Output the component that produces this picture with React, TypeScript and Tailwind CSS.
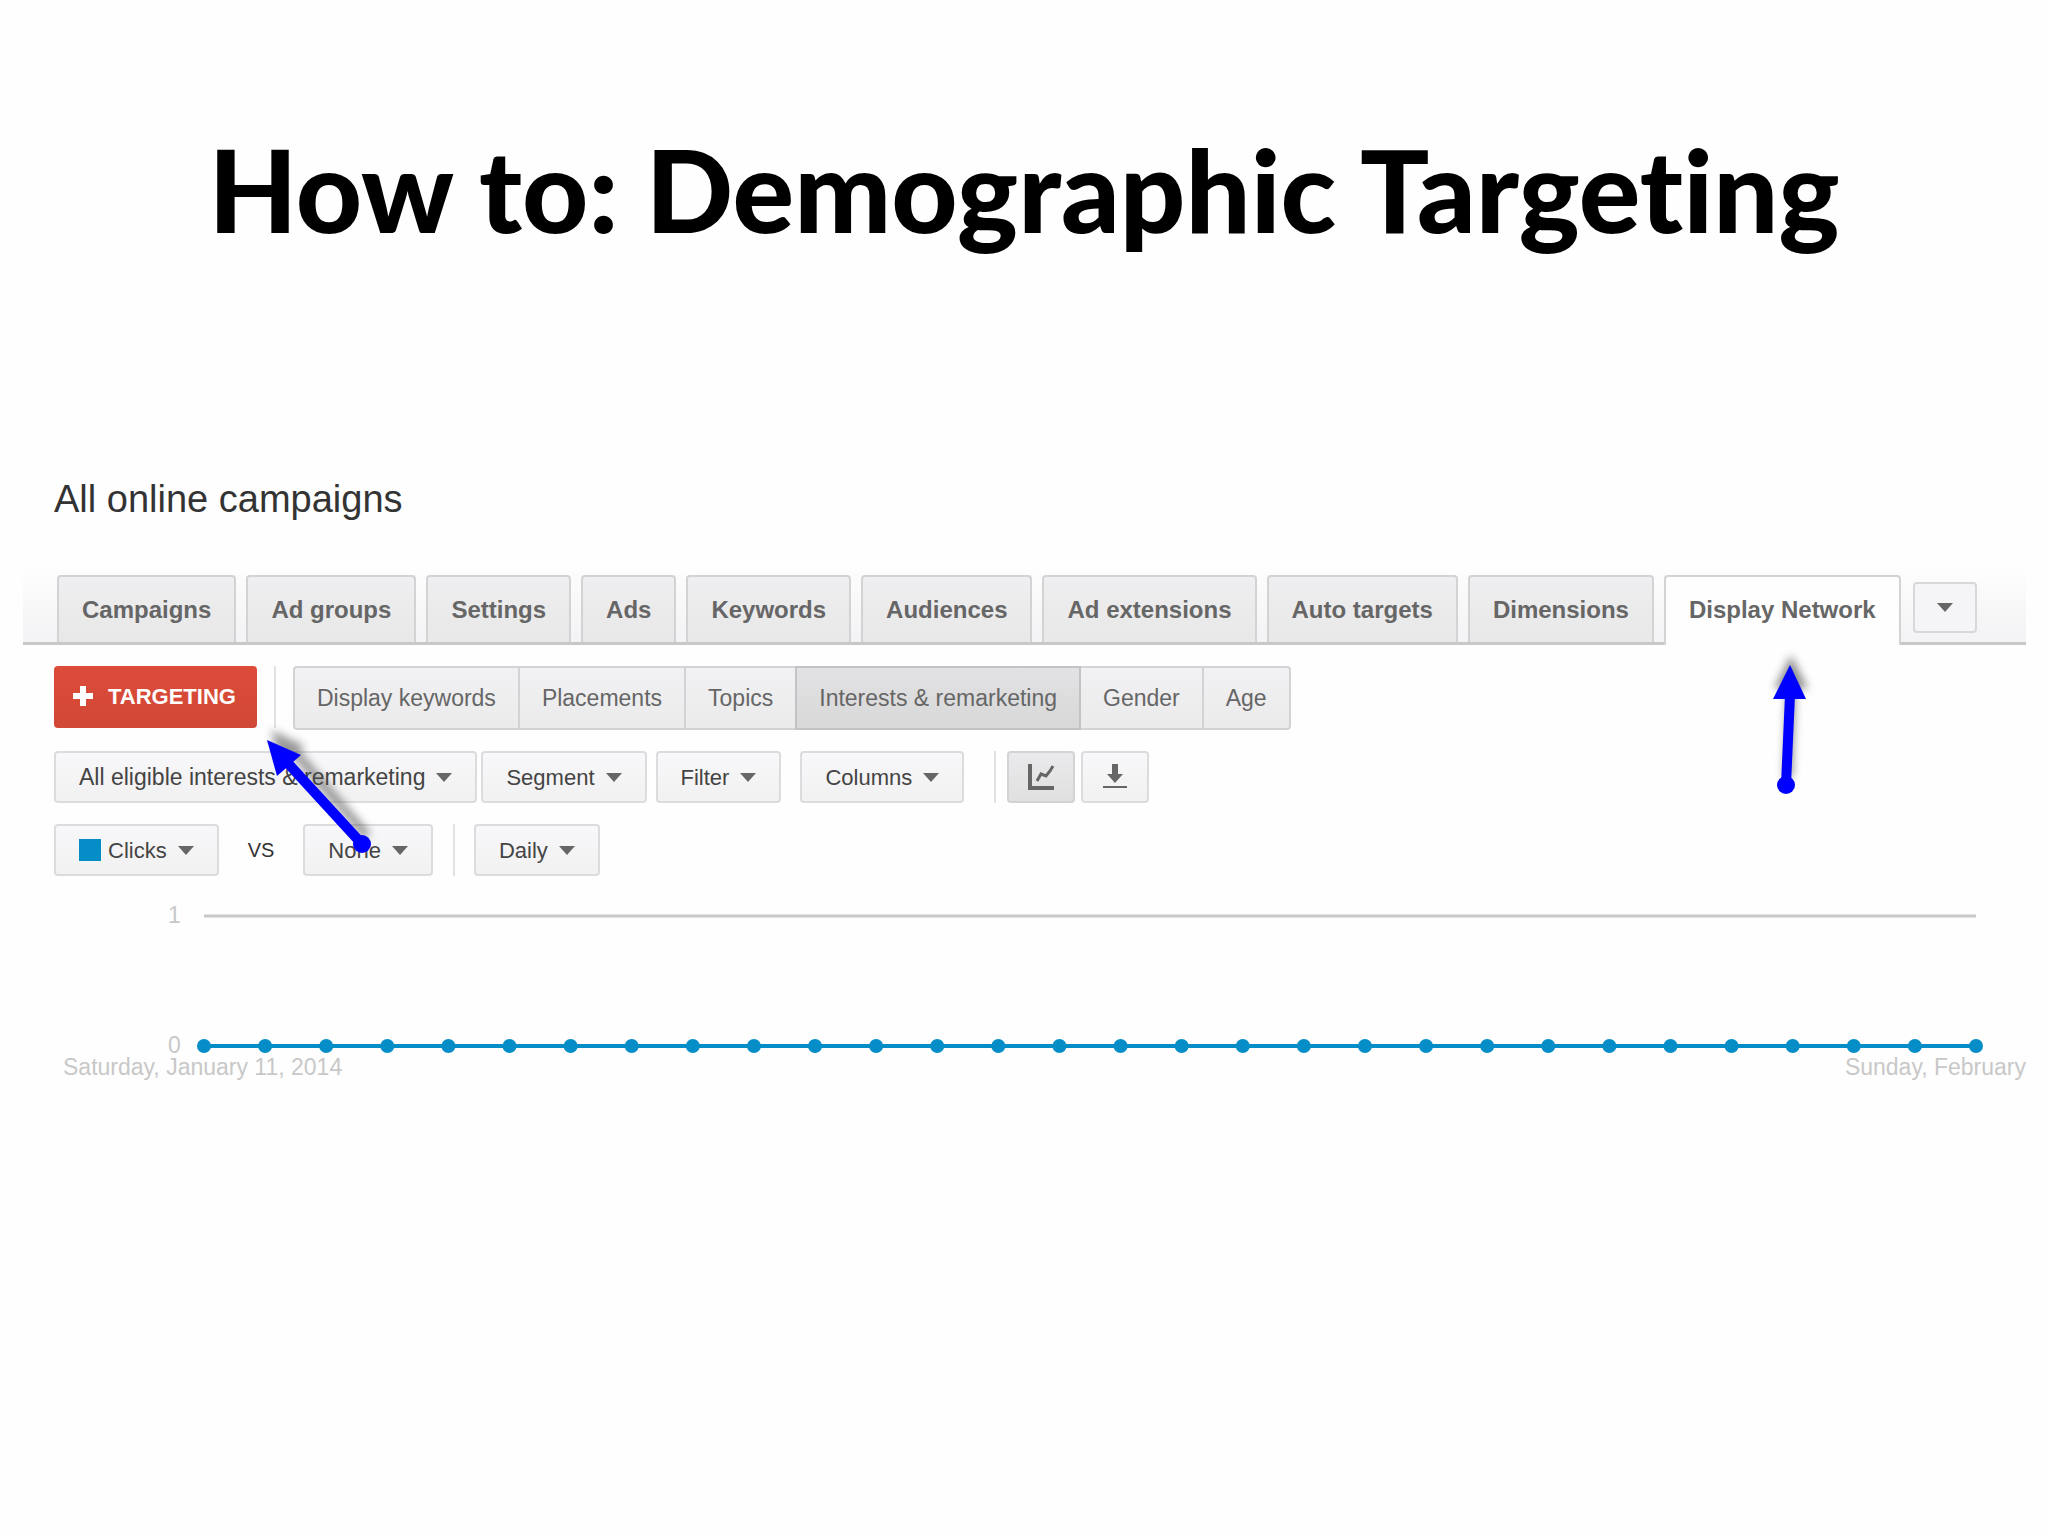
import { useState, type ReactNode } from 'react';
import clsx from 'clsx';

const mainTabs = [
  'Campaigns',
  'Ad groups',
  'Settings',
  'Ads',
  'Keywords',
  'Audiences',
  'Ad extensions',
  'Auto targets',
  'Dimensions',
  'Display Network',
];

const subTabs = ['Display keywords', 'Placements', 'Topics', 'Interests & remarketing', 'Gender', 'Age'];

const DAYS = 30;

const boxStyle =
  'flex h-[52px] items-center rounded-sm border-2 border-[#dcdbde] bg-linear-to-b from-[#f8f7f9] to-[#f1f1f2] text-[#444]';

export default function App() {
  const [activeTab, setActiveTab] = useState('Display Network');
  const [activeSubTab, setActiveSubTab] = useState('Interests & remarketing');
  const [isChartVisible, setIsChartVisible] = useState(true);

  return (
    <main className="min-h-screen overflow-hidden bg-[#fefefe] font-['Liberation_Sans',Arial,sans-serif]">
      <h1 className="pt-[122px] text-center font-['Lato',sans-serif] text-[115px] leading-[132px] font-black text-black [font-variant-ligatures:none]">
        How to: Demographic Targeting
      </h1>

      <section className="mt-[221px] pr-[22px] pl-[23px]">
        <h2 className="pl-[31px] text-[38px] leading-[48px] text-[#333]">All online campaigns</h2>

        <nav className="mt-[42px] flex h-[80px] items-end border-b-[3px] border-[#c8c7ca] bg-linear-to-b from-[#fefefe] to-[#f3f2f4] pl-[34px]">
          <div className="flex items-end gap-[10px]">
            {mainTabs.map((tab) => {
              const isActive = tab === activeTab;
              return (
                <button
                  key={tab}
                  onClick={() => setActiveTab(tab)}
                  className={clsx(
                    'relative rounded-t-sm border-2 border-b-0 border-[#d3d2d5] px-[23px] text-2xl font-bold whitespace-nowrap text-[#666]',
                    isActive ? '-mb-[3px] h-[70px] bg-[#fefefe] pb-[3px]' : 'h-[67px] bg-linear-to-b from-[#efeef0] to-[#e8e8e8]',
                  )}
                >
                  {tab}
                  {tab === 'Display Network' && <TabPointer />}
                </button>
              );
            })}
          </div>
          <button
            aria-label="More tabs"
            className="mb-[9px] ml-[12px] flex h-[51px] w-16 items-center justify-center rounded-sm border-2 border-[#d8d7da] bg-[#f5f4f6]"
          >
            <Caret />
          </button>
        </nav>

        <div className="mt-[21px] flex items-start pl-[31px]">
          <div className="relative">
            <button className="flex h-[62px] items-center gap-[15px] rounded-sm bg-linear-to-b from-[#dd4b39] to-[#d14836] pr-[21px] pb-0.5 pl-[19px] text-[22px] font-bold text-white">
              <svg width="20" height="20" viewBox="0 0 20 20" fill="currentColor" aria-hidden="true">
                <path d="M7 0h6v7h7v6h-7v7H7v-7H0V7h7z" />
              </svg>
              TARGETING
            </button>
            <TargetingPointer />
          </div>
          <Divider className="ml-[17px] h-[62px]" />
          <div className="ml-[17px] flex">
            {subTabs.map((tab) => (
              <button
                key={tab}
                onClick={() => setActiveSubTab(tab)}
                className={clsx(
                  '-ml-0.5 h-16 border-2 px-[22px] text-[23px] whitespace-nowrap text-[#666] first:ml-0 first:rounded-l-sm last:rounded-r-sm',
                  tab === activeSubTab
                    ? 'relative border-[#c3c2c5] bg-linear-to-b from-[#e2e1e3] to-[#d8d8d9]'
                    : 'border-[#d3d2d5] bg-linear-to-b from-[#f1f0f2] to-[#ebebec]',
                )}
              >
                {tab}
              </button>
            ))}
          </div>
        </div>

        <div className="mt-[21px] flex items-center pl-[31px]">
          <Dropdown className="text-[23px]" label="View" value="All eligible interests & remarketing" />
          <MenuButton className="ml-1">Segment</MenuButton>
          <MenuButton className="ml-[9px]">Filter</MenuButton>
          <MenuButton className="ml-[19px]">Columns</MenuButton>
          <Divider className="ml-[30px] h-[52px]" />
          <button
            aria-label="Toggle chart"
            aria-pressed={isChartVisible}
            onClick={() => setIsChartVisible(!isChartVisible)}
            className="ml-[11px] flex h-[52px] w-[68px] items-center justify-center rounded-sm border-2 border-[#d3d2d5] bg-linear-to-b from-[#eae9eb] to-[#e0e0e1]"
          >
            <svg width="28" height="28" viewBox="0 0 28 28" fill="none" stroke="#666" aria-hidden="true">
              <path d="M3 1v24h24" strokeWidth="4" />
              <path d="M10 18l4-7 5 2 4-5 3-5" strokeWidth="3" />
            </svg>
          </button>
          <button aria-label="Download report" className={clsx(boxStyle, 'ml-[6px] w-[68px] justify-center')}>
            <svg width="24" height="26" viewBox="0 0 24 26" fill="#666" aria-hidden="true">
              <path d="M9 0h6v10h5l-8 9-8-9h5z" />
              <path d="M0 22h24v2H0z" />
            </svg>
          </button>
        </div>

        <div className="mt-[21px] flex items-center pl-[31px]">
          <Dropdown className="text-[22px]" label="Primary metric" value="Clicks" hasSwatch />
          <span className="mx-[29px] text-xl text-[#333]">VS</span>
          <Dropdown className="text-[22px]" label="Secondary metric" value="None" />
          <Divider className="ml-5 h-[52px]" />
          <Dropdown className="ml-[19px] text-[22px]" label="Interval" value="Daily" />
        </div>

        {isChartVisible && <ClicksChart />}
      </section>
    </main>
  );
}

const Caret = () => (
  <svg width="16" height="9" viewBox="0 0 16 9" fill="#666" className="shrink-0" aria-hidden="true">
    <path d="M0 0h16L8 9z" />
  </svg>
);

const Divider = ({ className }: { className?: string }) => <div className={clsx('w-0.5 bg-[#e2e1e5]', className)} />;

const MenuButton = ({ children, className }: { children: ReactNode; className?: string }) => (
  <button className={clsx(boxStyle, 'gap-[11px] px-[23px] text-[22px]', className)}>
    {children}
    <Caret />
  </button>
);

interface DropdownProps {
  label: string;
  value: string;
  hasSwatch?: boolean;
  className?: string;
}

const Dropdown = ({ label, value, hasSwatch, className }: DropdownProps) => (
  <label className={clsx(boxStyle, 'gap-[11px] px-[23px]', className)}>
    <span className="flex items-center gap-[7px]">
      {hasSwatch && <span className="h-[22px] w-[22px] bg-[#058dc7]" />}
      <select aria-label={label} className="field-sizing-content appearance-none bg-transparent outline-none">
        <option>{value}</option>
      </select>
    </span>
    <Caret />
  </label>
);

const ClicksChart = () => (
  <div className="mt-[26px] text-[23px] leading-[26px] text-[#c8c8c8]">
    <div className="flex pr-[50px] pl-[145px]">
      <div className="flex w-9 flex-col justify-between">
        <span>1</span>
        <span>0</span>
      </div>
      <svg className="h-[156px] min-w-0 flex-1 overflow-visible" role="img" aria-label="Clicks per day">
        <line x1="0" y1="14" x2="100%" y2="14" stroke="#c8c7ca" strokeWidth="3" />
        <line x1="0" y1="144" x2="100%" y2="144" stroke="#058dc7" strokeWidth="4" />
        {Array.from({ length: DAYS }, (_, i) => (
          <circle key={i} cx={`${(i / (DAYS - 1)) * 100}%`} cy="144" r="7" fill="#058dc7" />
        ))}
      </svg>
    </div>
    <div className="-mt-1 flex justify-between pl-10">
      <span>Saturday, January 11, 2014</span>
      <span>Sunday, February</span>
    </div>
  </div>
);

const TargetingPointer = () => (
  <svg
    className="pointer-events-none absolute top-[62px] left-[201px] z-10 overflow-visible"
    width="120"
    height="130"
    viewBox="0 0 120 130"
    aria-hidden="true"
  >
    <g fill="#444" stroke="#444" opacity="0.55" className="blur-[4px]">
      <path d="M16 2L50 18 26 38z" stroke="none" />
      <path d="M38 22L112 108" strokeWidth="9" />
    </g>
    <path d="M12 12L46 27 22 48z" fill="#00f" />
    <path d="M30 32L107 116" stroke="#00f" strokeWidth="10" />
    <circle cx="107" cy="116" r="9" fill="#00f" />
  </svg>
);

const TabPointer = () => (
  <svg
    className="pointer-events-none absolute top-full left-[106px] overflow-visible"
    width="36"
    height="152"
    viewBox="0 0 36 152"
    aria-hidden="true"
  >
    <g fill="#333" stroke="#333" opacity="0.55" className="blur-[4px]">
      <path d="M19 10L36 44H2z" stroke="none" />
      <path d="M19 44L16 132" strokeWidth="9" />
    </g>
    <path d="M18 20L34 54H1z" fill="#00f" />
    <path d="M18 50L14 140" stroke="#00f" strokeWidth="10" />
    <circle cx="14" cy="140" r="9" fill="#00f" />
  </svg>
);
